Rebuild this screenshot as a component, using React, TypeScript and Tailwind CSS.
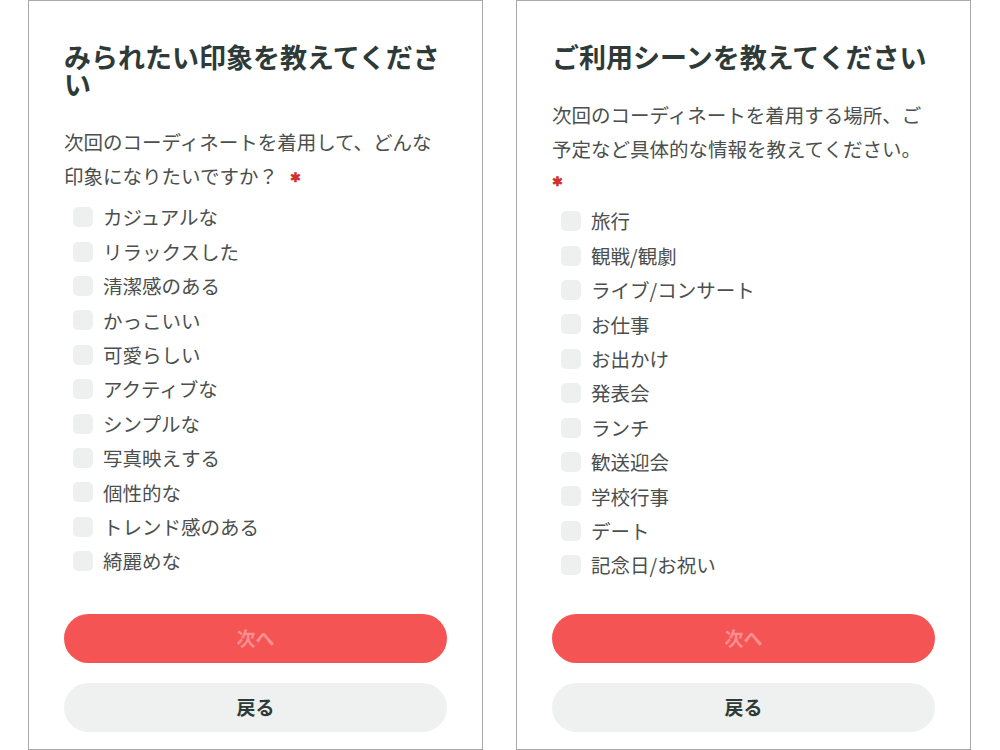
import React from 'react';

const font = { fontFamily: '"Noto Sans CJK JP", "Noto Sans", sans-serif' };

type CardProps = {
  title: React.ReactNode;
  question: React.ReactNode;
  options: string[];
};

function Required({ block }: { block?: boolean }) {
  return (
    <span
      className={
        block
          ? 'block h-[32px] text-[13px] leading-[30px] font-bold text-[#d0312d]'
          : 'ml-[12px] text-[13px] font-bold text-[#d0312d] align-[2px]'
      }
    >
      ✱
    </span>
  );
}

function QuestionCard({ title, question, options }: CardProps) {
  return (
    <div className="flex h-[750px] w-[455px] shrink-0 flex-col border border-[#a9a9a9] bg-white px-[35px] pt-[42px] pb-[17px]">
      <h1 className="text-[27px] font-bold leading-[27px] text-[#2e3a38]">{title}</h1>
      <p className="mt-[28px] text-[19.5px] leading-[34px] text-[#4b4f4e]">{question}</p>
      <ul className="mt-[6px] flex flex-col">
        {options.map((opt) => (
          <li key={opt} className="flex h-[34.4px] items-center gap-[10px] pl-[9px]">
            <span className="h-[20px] w-[20px] shrink-0 rounded-[5px] bg-[#eef0ef]" />
            <span className="text-[19.5px] leading-none text-[#4b4f4e]">{opt}</span>
          </li>
        ))}
      </ul>
      <div className="mt-auto flex flex-col gap-[20px]">
        <button className="h-[49px] w-full rounded-full bg-[#f55454] text-[19px] font-bold text-[#f88f8f]">次へ</button>
        <button className="h-[49px] w-full rounded-full bg-[#eff1f0] text-[19px] font-bold text-[#2e3a38]">戻る</button>
      </div>
    </div>
  );
}

export default function App() {
  return (
    <div className="flex h-[750px] w-[1000px] gap-[33px] overflow-hidden bg-white pl-[28px]" style={font}>
      <QuestionCard
        title="みられたい印象を教えてください"
        question={
          <>
            次回のコーディネートを着用して、どんな印象になりたいですか？
            <Required />
          </>
        }
        options={[
          'カジュアルな',
          'リラックスした',
          '清潔感のある',
          'かっこいい',
          '可愛らしい',
          'アクティブな',
          'シンプルな',
          '写真映えする',
          '個性的な',
          'トレンド感のある',
          '綺麗めな',
        ]}
      />
      <QuestionCard
        title="ご利用シーンを教えてください"
        question={
          <>
            次回のコーディネートを着用する場所、ご予定など具体的な情報を教えてください。
            <Required block />
          </>
        }
        options={[
          '旅行',
          '観戦/観劇',
          'ライブ/コンサート',
          'お仕事',
          'お出かけ',
          '発表会',
          'ランチ',
          '歓送迎会',
          '学校行事',
          'デート',
          '記念日/お祝い',
        ]}
      />
    </div>
  );
}
